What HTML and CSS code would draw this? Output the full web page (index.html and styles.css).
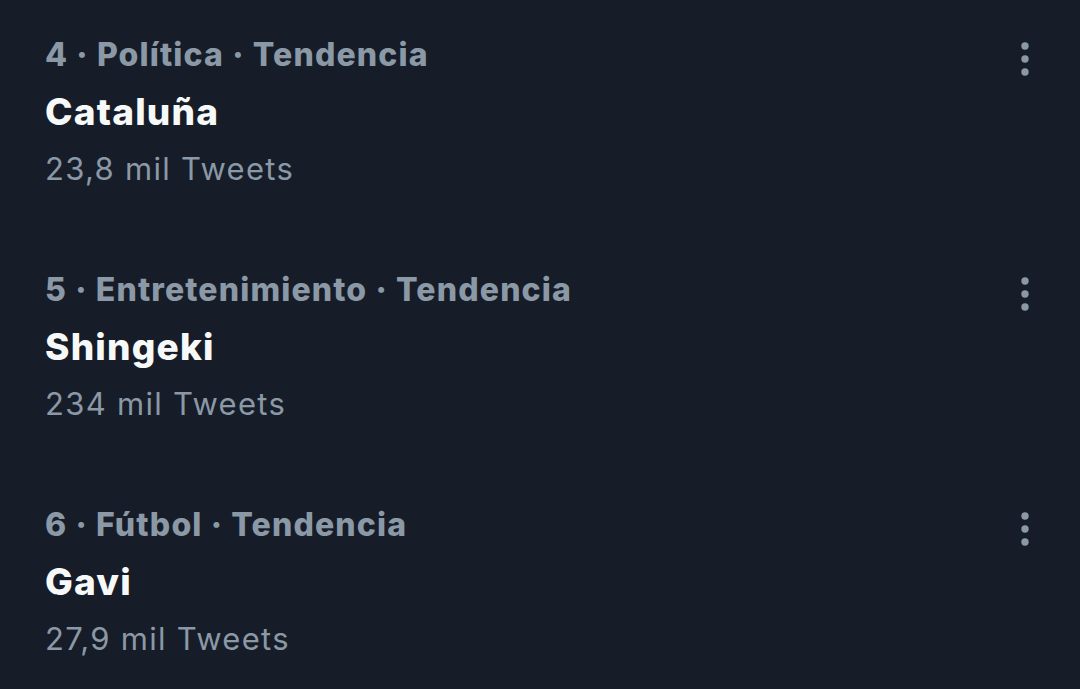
FILE: index.html
```html
<!DOCTYPE html>
<html lang="es">
<head>
<meta charset="utf-8">
<link rel="stylesheet" href="styles.css">
</head>
<body>
<main class="trends">
  <div class="trend">
    <div class="trend-body">
      <div class="meta">4 · Política · Tendencia</div>
      <div class="title">Cataluña</div>
      <div class="count">23,8 mil Tweets</div>
    </div>
    <svg class="more" viewBox="0 0 20 44" width="20" height="44"><circle cx="10" cy="11" r="3.7"/><circle cx="10" cy="24" r="3.7"/><circle cx="10" cy="37" r="3.7"/></svg>
  </div>
  <div class="trend">
    <div class="trend-body">
      <div class="meta">5 · Entretenimiento · Tendencia</div>
      <div class="title">Shingeki</div>
      <div class="count">234 mil Tweets</div>
    </div>
    <svg class="more" viewBox="0 0 20 44" width="20" height="44"><circle cx="10" cy="11" r="3.7"/><circle cx="10" cy="24" r="3.7"/><circle cx="10" cy="37" r="3.7"/></svg>
  </div>
  <div class="trend">
    <div class="trend-body">
      <div class="meta">6 · Fútbol · Tendencia</div>
      <div class="title">Gavi</div>
      <div class="count">27,9 mil Tweets</div>
    </div>
    <svg class="more" viewBox="0 0 20 44" width="20" height="44"><circle cx="10" cy="11" r="3.7"/><circle cx="10" cy="24" r="3.7"/><circle cx="10" cy="37" r="3.7"/></svg>
  </div>
</main>
</body>
</html>
```
FILE: styles.css
```css
html, body {
  margin: 0;
  padding: 0;
  background: #161d29;
  height: 100%;
  overflow: hidden;
}
body {
  font-family: Inter, "Liberation Sans", Arial, sans-serif;
}
.trends {
  display: flex;
  flex-direction: column;
}
.trend {
  display: flex;
  justify-content: space-between;
  align-items: flex-start;
  padding: 35px 45px 46px 45px;
}
.trend-body {
  display: flex;
  flex-direction: column;
}
.meta {
  color: #8b98a5;
  font-weight: 800;
  font-size: 32px;
  line-height: 40px;
  letter-spacing: 1.15px;
}
.title {
  color: #f7f9f9;
  font-weight: 800;
  font-size: 37px;
  line-height: 44px;
  margin-top: 15px;
  letter-spacing: 1.2px;
}
.count {
  color: #8b98a5;
  font-weight: 400;
  font-size: 31px;
  line-height: 40px;
  margin-top: 15px;
  letter-spacing: 1.3px;
}
.more {
  fill: #8b98a5;
  display: block;
}
```
